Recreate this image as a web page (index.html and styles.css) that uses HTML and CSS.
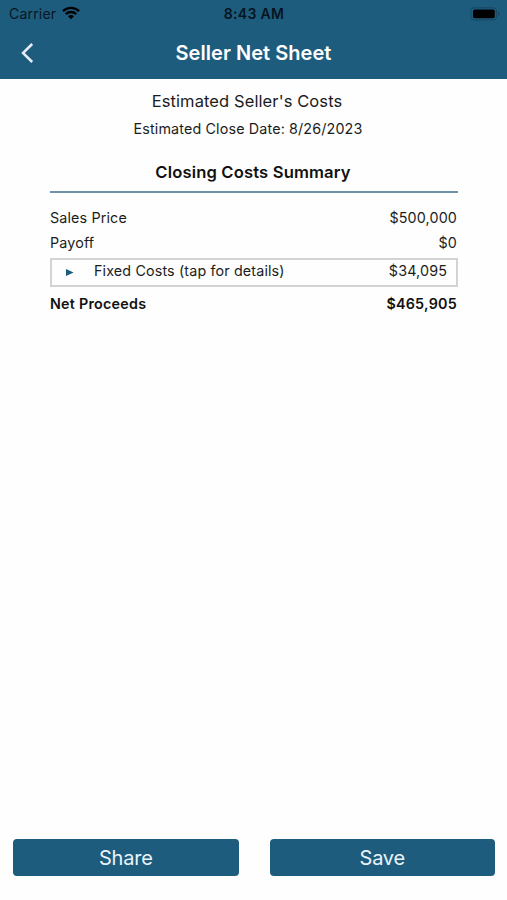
FILE: index.html
```html
<!DOCTYPE html>
<html lang="en">
<head>
    <meta charset="UTF-8">
    <meta name="viewport" content="width=device-width, initial-scale=1.0">
    <title>Seller Net Sheet</title>
    <link rel="stylesheet" href="styles.css">
</head>
<body>
    <header class="header">
        <div class="status-bar">
            <div class="carrier">
                <span class="carrier-name">Carrier</span>
                <svg class="wifi" width="18" height="14" viewBox="0 0 18 14">
                    <path d="M1 5.2a11.3 11.3 0 0 1 16 0M3.8 8.1a7.4 7.4 0 0 1 10.4 0" fill="none" stroke="#000" stroke-width="2.4"/>
                    <path d="M9 13.3l-3-3a4.2 4.2 0 0 1 6 0z" fill="#000"/>
                </svg>
            </div>
            <div class="time">8:43 AM</div>
            <svg class="battery" width="31" height="14" viewBox="0 0 31 14">
                <rect x="1" y=".8" width="25.5" height="12.2" rx="3" fill="none" stroke="#174762"/>
                <rect x="3" y="2.6" width="21.8" height="8.6" rx="1.6" fill="#000"/>
                <path d="M28 4.8v4.4q1.6-.7 1.6-2.2t-1.6-2.2z" fill="#174762"/>
            </svg>
        </div>
        <div class="nav">
            <button class="back" aria-label="Back">
                <svg width="14" height="22" viewBox="0 0 14 22">
                    <path d="M11.2 2L2 11l9.2 9" fill="none" stroke="#e4edf5" stroke-width="2.5"/>
                </svg>
            </button>
            <h1 class="title">Seller Net Sheet</h1>
        </div>
    </header>

    <main class="content">
        <p class="subtitle">Estimated Seller's Costs</p>
        <p class="close-date">Estimated Close Date: 8/26/2023</p>
        <h2 class="summary-title">Closing Costs Summary</h2>

        <div class="row">
            <span>Sales Price</span>
            <span>$500,000</span>
        </div>
        <div class="row">
            <span>Payoff</span>
            <span>$0</span>
        </div>
        <div class="row fixed-costs">
            <svg class="arrow" width="8" height="7" viewBox="0 0 8 7">
                <path d="M0 0l7.6 3.5L0 7z" fill="#1e5c7e"/>
            </svg>
            <span class="fixed-label">Fixed Costs (tap for details)</span>
            <span>$34,095</span>
        </div>
        <div class="row net">
            <span>Net Proceeds</span>
            <span>$465,905</span>
        </div>
    </main>

    <footer class="actions">
        <button class="btn">Share</button>
        <button class="btn">Save</button>
    </footer>
</body>
</html>
```
FILE: styles.css
```css
* {
    box-sizing: border-box;
}

body {
    margin: 0;
    height: 900px;
    display: flex;
    flex-direction: column;
    background-color: #fefefe;
    color: #1c1c1c;
    font-family: Inter, "Liberation Sans", sans-serif;
}

h1, h2, p {
    margin: 0;
}

button {
    border: 0;
    font-family: inherit;
}

.header {
    height: 79px;
    background-color: #1e5c7e;
}

.status-bar {
    display: grid;
    grid-template-columns: 1fr auto 1fr;
    align-items: center;
    height: 27px;
    padding: 0 6px 0 9px;
    color: #06151e;
    font-size: 14px;
}

.carrier {
    display: flex;
    align-items: center;
    gap: 6px;
}

.carrier-name {
    letter-spacing: 0.2px;
}

.wifi {
    margin-top: -2px;
}

.time {
    margin-right: 2px;
    font-weight: 600;
    letter-spacing: 0.3px;
}

.battery {
    justify-self: end;
}

.nav {
    display: grid;
    grid-template-columns: 56px 1fr 56px;
    align-items: center;
    height: 52px;
}

.back {
    display: flex;
    padding: 0 0 0 21px;
    background: none;
}

.title {
    color: #fff;
    font-size: 20px;
    font-weight: 600;
    text-align: center;
    letter-spacing: 0.05px;
}

.content {
    flex: 1;
    padding: 10px 49px 0 50px;
}

.subtitle {
    margin-right: 14px;
    font-size: 16.5px;
    line-height: 24px;
    text-align: center;
    letter-spacing: 0.1px;
}

.close-date {
    margin-top: 5px;
    margin-right: 12px;
    font-size: 14.3px;
    line-height: 22px;
    text-align: center;
    letter-spacing: 0.15px;
}

.summary-title {
    height: 53px;
    margin-bottom: 12px;
    padding-top: 20px;
    padding-right: 2px;
    border-bottom: 2px solid #6c93ab;
    color: #111;
    font-size: 16.6px;
    line-height: 24px;
    font-weight: 600;
    text-align: center;
    letter-spacing: 0.15px;
}

.row {
    display: flex;
    justify-content: space-between;
    padding-right: 1px;
    font-size: 14.3px;
    line-height: 25px;
    letter-spacing: 0.15px;
}

.fixed-costs {
    height: 29px;
    margin: 3px 0 4px;
    padding: 0 9px 0 14px;
    border: 2px solid #d3d3d3;
    line-height: 22px;
}

.arrow {
    margin-top: 9px;
}

.fixed-label {
    flex: 1;
    margin-left: 20px;
}

.net {
    color: #111;
    font-weight: 600;
    letter-spacing: 0.25px;
}

.actions {
    display: grid;
    grid-template-columns: 1fr 1fr;
    gap: 31px;
    padding: 0 12px 24px 13px;
}

.btn {
    height: 37px;
    border-radius: 4px;
    background-color: #1e5c7e;
    color: #e9f3f9;
    font-size: 20px;
    letter-spacing: -0.2px;
}
```
